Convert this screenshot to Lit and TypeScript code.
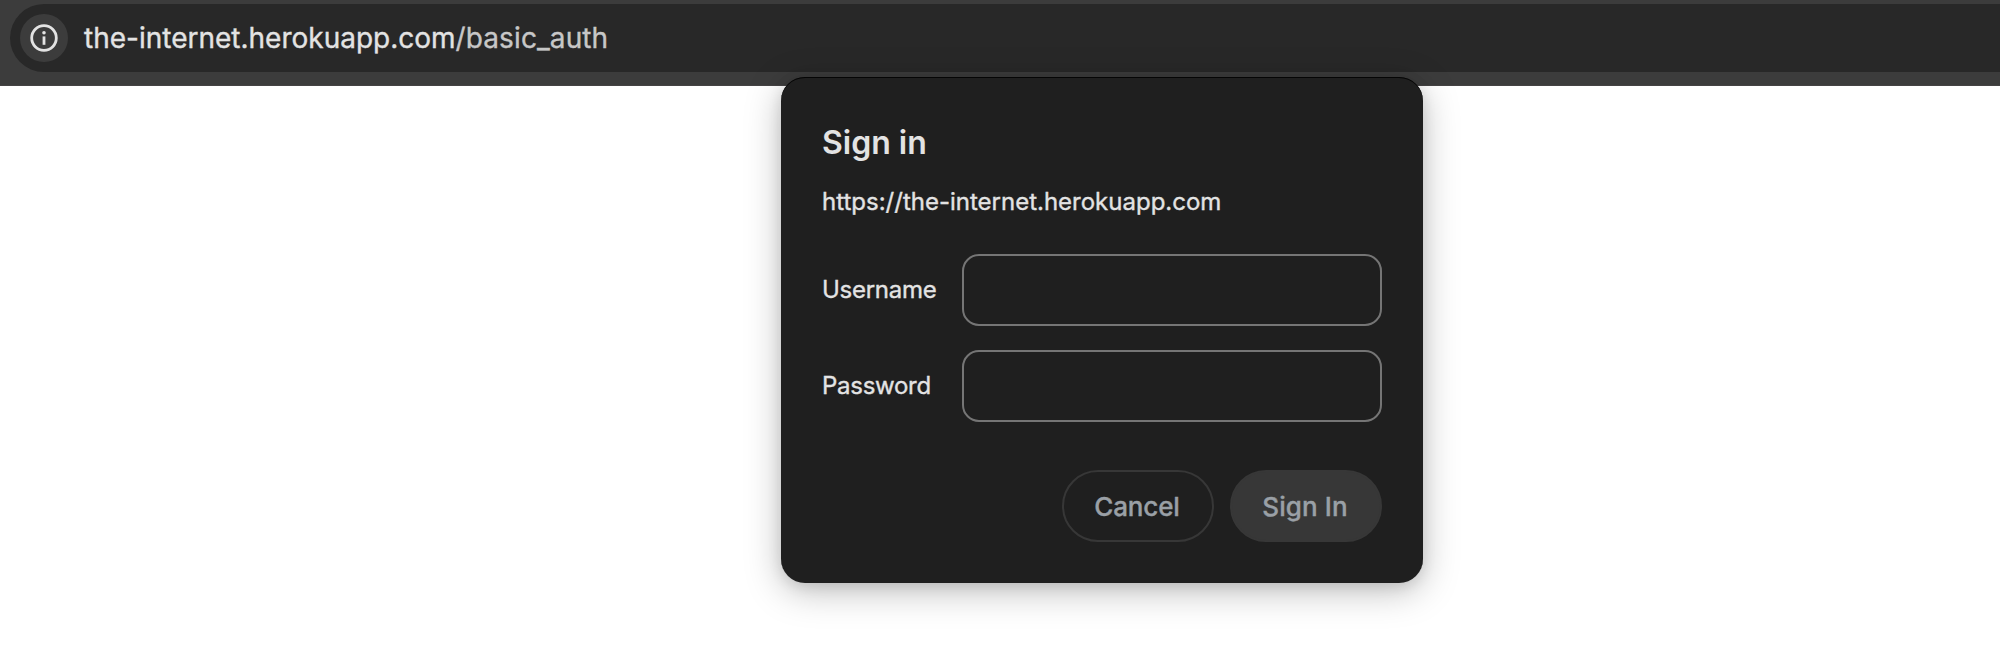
import { LitElement, html, css } from "lit";
import { customElement } from "lit/decorators.js";

@customElement("address-bar")
class AddressBar extends LitElement {
  static styles = css`
    :host { display: block; height: 86px; box-sizing: border-box; padding: 4px 0 0 10px; background: #3c3c3c; border-bottom: 1px solid #454344; }
    .field { display: flex; align-items: center; height: 68px; box-sizing: border-box; padding-left: 10px; background: #282828; border-radius: 34px 0 0 34px; }
    .info { display: flex; width: 48px; height: 48px; border-radius: 50%; background: #3c3c3c; }
    .url { margin-left: 16px; font-size: 28px; line-height: 40px; letter-spacing: 0; white-space: nowrap; color: #c7c7c7; -webkit-text-stroke: 0.35px; }
    .host { color: #e3e3e3; }
    .path { letter-spacing: 0.1px; }
  `;
  render() {
    return html`<div class="field">
      <div class="info">
        <svg width="48" height="48" viewBox="0 0 48 48">
          <circle cx="24" cy="24" r="12.3" fill="none" stroke="#e3e3e3" stroke-width="2.8" />
          <circle cx="24" cy="18.7" r="1.8" fill="#e3e3e3" />
          <rect x="22.6" y="22.4" width="2.8" height="8.4" fill="#e3e3e3" />
        </svg>
      </div>
      <div class="url"><span class="host">the-internet.herokuapp.com</span><span class="path">/basic_auth</span></div>
    </div>`;
  }
}

@customElement("sign-in-dialog")
class SignInDialog extends LitElement {
  static styles = css`
    :host { display: block; box-sizing: border-box; width: 642px; height: 506px; padding: 46px 41px 0 41px; border-radius: 24px; background: #1f1f1f; color: #e3e3e3; box-shadow: inset 0 1px 0 #050505, 0 8px 36px rgba(0, 0, 0, 0.26), 0 3px 14px rgba(0, 0, 0, 0.1); }
    .title { margin: 0; font-size: 32px; font-weight: 560; line-height: 40px; letter-spacing: 0; }
    .origin { margin: 23px 0 0; font-size: 24px; line-height: 32px; -webkit-text-stroke: 0.35px; }
    .rows { display: grid; grid-template-columns: 140px 420px; row-gap: 24px; align-items: center; margin-top: 36px; font-size: 24px; line-height: 32px; letter-spacing: -0.28px; -webkit-text-stroke: 0.35px; }
    input { box-sizing: border-box; width: 420px; height: 72px; margin: 0; padding: 0 16px; border: 2px solid #757575; border-radius: 17px; background: transparent; color: inherit; font: inherit; outline: none; }
    .actions { display: flex; justify-content: flex-end; gap: 16px; margin-top: 48px; }
    button { box-sizing: border-box; width: 152px; height: 72px; margin: 0; padding: 2px 2px 0 0; border: 2px solid #373737; border-radius: 36px; background: transparent; color: #9aa0a6; font: 500 26px/32px Inter, sans-serif; letter-spacing: -0.12px; -webkit-text-stroke: 0.35px; }
    .primary { background: #373737; letter-spacing: 0.1px; }
  `;
  render() {
    return html`<h1 class="title"><span>Sign in</span></h1>
      <p class="origin"><span>https://the-internet.herokuapp.com</span></p>
      <div class="rows">
        <label class="user" for="u">Username</label><input id="u" />
        <label class="pass" for="p">Password</label><input id="p" type="password" />
      </div>
      <div class="actions">
        <button class="cancel">Cancel</button>
        <button class="primary">Sign In</button>
      </div>`;
  }
}

@customElement("app-root")
class AppRoot extends LitElement {
  static styles = css`
    :host { display: block; position: relative; height: 672px; overflow: hidden; background: #fff; font-family: Inter, sans-serif; }
    .dialog { position: absolute; left: 781px; top: 77px; }
  `;
  render() {
    return html`<address-bar></address-bar><sign-in-dialog class="dialog"></sign-in-dialog>`;
  }
}
